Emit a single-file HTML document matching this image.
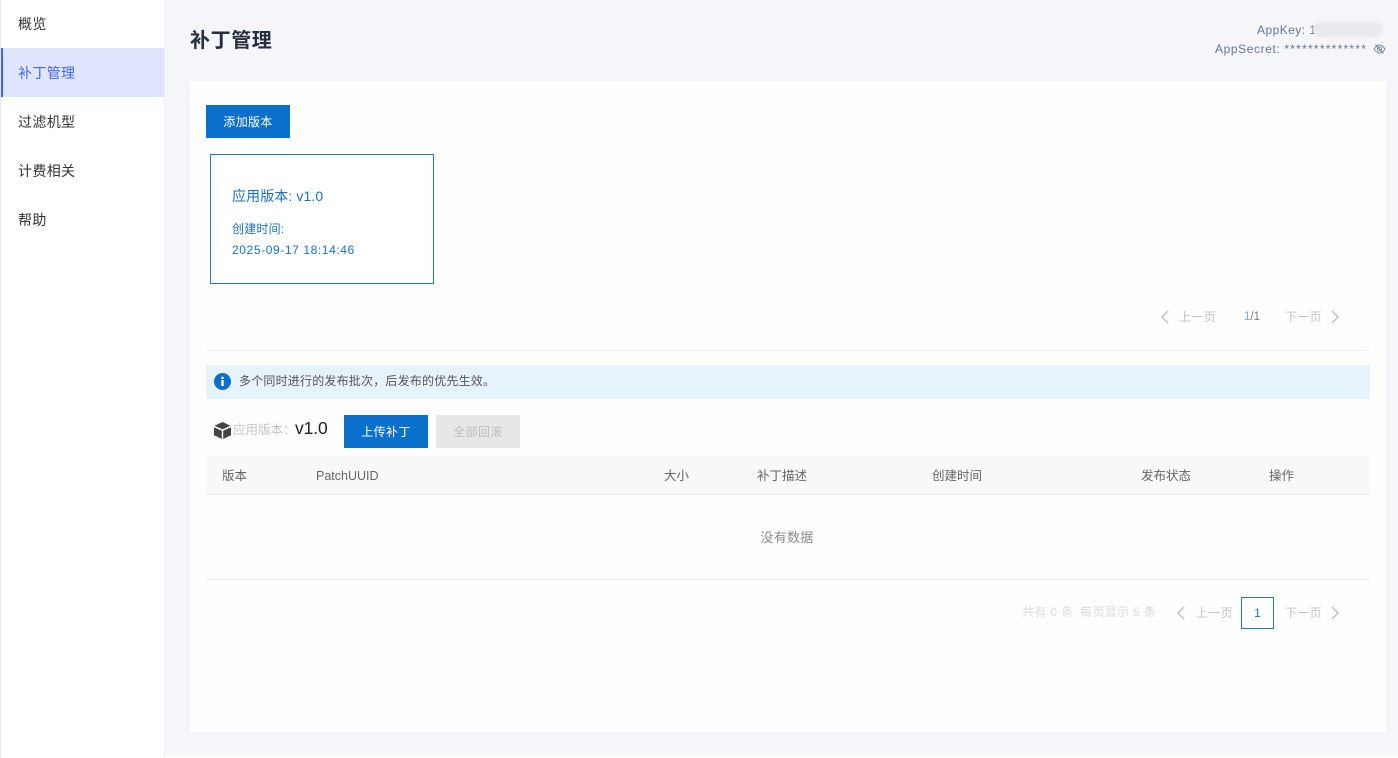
<!DOCTYPE html>
<html lang="zh-CN">
<head>
<meta charset="utf-8">
<title>补丁管理</title>
<style>
html,body{margin:0;padding:0;width:1398px;height:758px;overflow:hidden;background:#f5f6f9}
body{position:relative;font-family:"Liberation Sans","Noto Sans CJK SC",sans-serif;-webkit-font-smoothing:antialiased}
.a{position:absolute;box-sizing:border-box}
.t{position:absolute;white-space:nowrap;line-height:20px}
.nav{left:18px;font-size:14px;letter-spacing:.35px;color:#333}
.th{top:466px;font-size:12.5px;color:#666}
.pg{font-size:12px;letter-spacing:.3px;color:#c4c4c4}
</style>
</head>
<body>
<!-- sidebar -->
<div class="a" style="left:0;top:0;width:165px;height:758px;background:#fff;border-right:1px solid #eeeff2"></div>
<div class="a" style="left:0;top:0;width:1px;height:758px;background:#e6e9fb"></div>
<div class="a" style="left:1px;top:48px;width:163px;height:49px;background:#e0e6fe;border-left:2px solid #3a63f0"></div>
<div class="t nav" style="top:14px">概览</div>
<div class="t nav" style="top:63px;color:#3f68f2">补丁管理</div>
<div class="t nav" style="top:112px">过滤机型</div>
<div class="t nav" style="top:161px">计费相关</div>
<div class="t nav" style="top:210px">帮助</div>

<!-- header -->
<div class="t" style="left:190px;top:28px;font-size:20px;font-weight:700;letter-spacing:.6px;line-height:26px;color:#252f3e">补丁管理</div>
<div class="t" style="left:1257px;top:20px;font-size:12px;letter-spacing:.45px;color:#68758c">AppKey: 1</div>
<div class="a" style="left:1313px;top:22px;width:70px;height:15px;border-radius:8px;background:#e9eaee;filter:blur(1px)"></div>
<div class="t" style="left:1215px;top:39px;font-size:12px;letter-spacing:.6px;color:#68758c">AppSecret: <span style="letter-spacing:1.25px">**************</span></div>
<svg class="a" style="left:1373px;top:43px" width="13" height="12" viewBox="0 0 13 12" fill="none" stroke="#7c879b" stroke-width="1">
<path d="M1 6C3 3 5 2 6.500 2S10 3 12 6C10 9 8 10 6.500 10S3 9 1 6Z"/><circle cx="6.500" cy="6" r="2"/><path d="M2.500 1.500L10.500 10.500"/></svg>

<!-- main card -->
<div class="a" style="left:190px;top:81px;width:1196px;height:651px;background:#fefefe"></div>
<div class="a" style="left:165px;top:756px;width:1233px;height:2px;background:#fdfdfe"></div>
<div class="a" style="left:206px;top:105px;width:84px;height:33px;background:#0b70cc"></div>
<div class="t" style="left:206px;top:112px;width:84px;text-align:center;font-size:12px;letter-spacing:.3px;color:#fff">添加版本</div>

<div class="a" style="left:210px;top:154px;width:224px;height:130px;border:1px solid #2176cf;background:#fff"></div>
<div class="t" style="left:232px;top:186px;font-size:14px;letter-spacing:.1px;color:#1570cc">应用版本: v1.0</div>
<div class="t" style="left:232px;top:219px;font-size:12px;letter-spacing:.2px;color:#1570cc">创建时间:</div>
<div class="t" style="left:232px;top:240px;font-size:12px;letter-spacing:.6px;color:#1570cc">2025-09-17 18:14:46</div>

<!-- version pager -->
<svg class="a" style="left:1159px;top:309px" width="12" height="16" viewBox="0 0 12 16" fill="none" stroke="#c2c2c2" stroke-width="1.500"><path d="M9 2L3 8L9 14"/></svg>
<div class="t pg" style="left:1179px;top:307px">上一页</div>
<div class="t pg" style="left:1244px;top:307px;letter-spacing:0;font-size:11.5px;color:#777"><span style="color:#7aa6dc">1</span>/1</div>
<div class="t pg" style="left:1285px;top:307px">下一页</div>
<svg class="a" style="left:1329px;top:309px" width="12" height="16" viewBox="0 0 12 16" fill="none" stroke="#c2c2c2" stroke-width="1.500"><path d="M3 2L9 8L3 14"/></svg>

<div class="a" style="left:206px;top:350px;width:1164px;height:1px;background:#f0f0f0"></div>

<!-- notice -->
<div class="a" style="left:206px;top:365px;width:1164px;height:34px;background:#e7f3fa"></div>
<svg class="a" style="left:214px;top:373px" width="17" height="17" viewBox="0 0 17 17"><circle cx="8.500" cy="8.500" r="8.500" fill="#0b70cc"/><rect x="7.300" y="7" width="2.400" height="6" fill="#fff"/><rect x="7.300" y="3.800" width="2.400" height="2.200" fill="#fff"/></svg>
<div class="t" style="left:239px;top:371px;font-size:12px;letter-spacing:.2px;color:#555">多个同时进行的发布批次，后发布的优先生效。</div>

<!-- version row -->
<svg class="a" style="left:213px;top:421px" width="19" height="19" viewBox="0 0 19 19"><path d="M9.500 1L17.500 4.800L9.500 8.400L1.500 4.800Z" fill="#444"/><path d="M1 6.300L8.800 9.800V18L1 14.300Z" fill="#444"/><path d="M18 6.300L10.200 9.800V18L18 14.300Z" fill="#444"/></svg>
<div class="t" style="left:233px;top:420px;font-size:12.500px;color:#c6c6c6">应用版本：</div>
<div class="t" style="left:295px;top:418px;font-size:17.500px;letter-spacing:-.1px;color:#221a2e">v1.0</div>
<div class="a" style="left:344px;top:415px;width:84px;height:33px;background:#0b70cc"></div>
<div class="t" style="left:344px;top:422px;width:84px;text-align:center;font-size:12px;letter-spacing:.4px;color:#fff">上传补丁</div>
<div class="a" style="left:436px;top:415px;width:84px;height:33px;background:#e7e7e7"></div>
<div class="t" style="left:436px;top:422px;width:84px;text-align:center;font-size:12px;letter-spacing:.4px;color:#bdbdbd">全部回滚</div>

<!-- table -->
<div class="a" style="left:206px;top:456px;width:1164px;height:39px;background:#f8f8f8;border-bottom:1px solid #ececec"></div>
<div class="t th" style="left:222px">版本</div>
<div class="t th" style="left:316px">PatchUUID</div>
<div class="t th" style="left:664px">大小</div>
<div class="t th" style="left:757px">补丁描述</div>
<div class="t th" style="left:932px">创建时间</div>
<div class="t th" style="left:1141px">发布状态</div>
<div class="t th" style="left:1269px">操作</div>
<div class="t" style="left:205px;top:528px;width:1164px;text-align:center;font-size:13px;letter-spacing:.3px;color:#8a8a8a">没有数据</div>
<div class="a" style="left:206px;top:579px;width:1164px;height:1px;background:#e6e6e6"></div>

<!-- table pager -->
<div class="t" style="left:1022px;top:602px;font-size:12px;letter-spacing:.35px;color:#dadada">共有 0 条</div>
<div class="t" style="left:1080px;top:602px;font-size:12px;letter-spacing:.35px;color:#dadada">每页显示 5 条</div>
<svg class="a" style="left:1175px;top:605px" width="12" height="16" viewBox="0 0 12 16" fill="none" stroke="#c2c2c2" stroke-width="1.500"><path d="M9 2L3 8L9 14"/></svg>
<div class="t pg" style="left:1196px;top:603px">上一页</div>
<div class="a" style="left:1241px;top:597px;width:33px;height:32px;border:1px solid #2176cf;background:#fff"></div>
<div class="t" style="left:1241px;top:603px;width:33px;text-align:center;font-size:12px;color:#1570cc">1</div>
<div class="t pg" style="left:1285px;top:603px">下一页</div>
<svg class="a" style="left:1329px;top:605px" width="12" height="16" viewBox="0 0 12 16" fill="none" stroke="#c2c2c2" stroke-width="1.500"><path d="M3 2L9 8L3 14"/></svg>
</body>
</html>
